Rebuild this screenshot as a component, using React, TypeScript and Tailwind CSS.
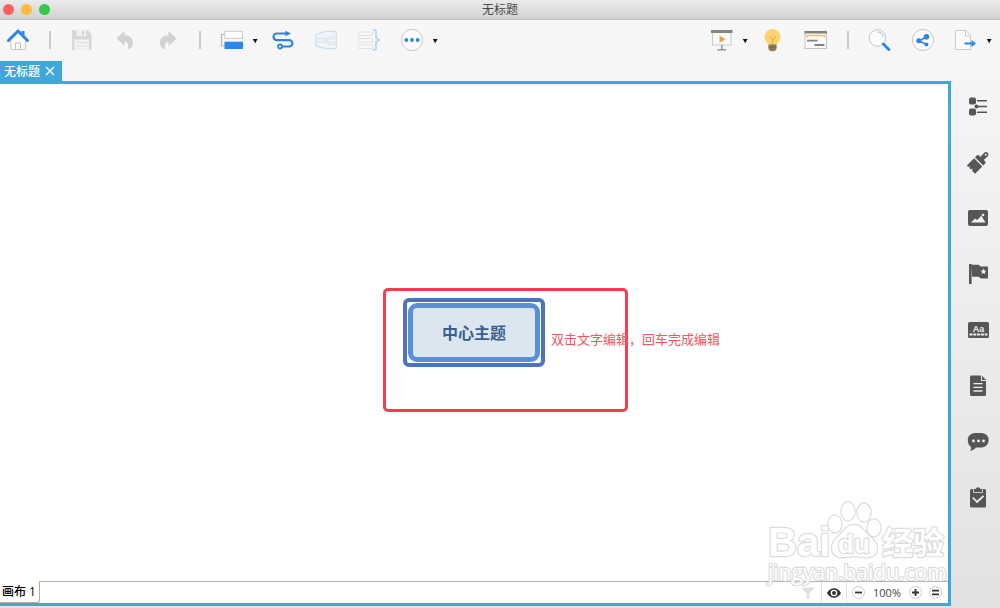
import type { ReactNode } from 'react'

type IconProps = { children: ReactNode }

function Icon({ children }: IconProps) {
  return (
    <svg viewBox="0 0 24 24" className="block size-6 shrink-0" fill="none" aria-hidden="true">
      {children}
    </svg>
  )
}

function ToolButton({ label, disabled, children }: { label: string; disabled?: boolean; children: ReactNode }) {
  return (
    <button type="button" aria-label={label} disabled={disabled} className="size-6 shrink-0">
      <Icon>{children}</Icon>
    </button>
  )
}

function MenuArrow({ label }: { label: string }) {
  return (
    <button type="button" aria-label={label} className="flex h-6 w-2 shrink-0 items-center justify-center">
      <svg viewBox="0 0 8 8" className="size-2" aria-hidden="true">
        <path d="M1.8 3h4.800L4.200 7.200z" fill="#111" />
      </svg>
    </button>
  )
}

function Separator() {
  return <div className="h-[18px] w-[2px] shrink-0 bg-[#cbcbcb]" />
}

const panels = [
  {
    label: '大纲',
    icon: (
      <g fill="#565656">
        <rect x="3" y="3.500" width="7" height="7" rx="2" />
        <rect x="3" y="14.500" width="7" height="7" rx="2" />
        <circle cx="10.500" cy="12.500" r="2" />
        <path d="M11 6h10v1.500H11zM12 11.800h9v1.500h-9zM11 17.500h10V19H11z" />
      </g>
    ),
  },
  {
    label: '格式',
    icon: (
      <g transform="translate(12 12.500) rotate(45)" fill="#565656">
        <path d="M-2.200-3.500L-2.600-11c0-1.500 1.100-2.700 2.600-2.700S2.600-12.500 2.600-11L2.200-3.500z" />
        <path d="M-5.800-1.500v-2.700c0-1 .7-1.600 1.600-1.600h8.400c.9 0 1.600.6 1.600 1.600v2.700z" />
        <path d="M-5.800-.3H5.800V10H1.500L.7 7.800-.2 10h-2L-3 8.300-3.800 10h-2z" />
        <circle cy="-11" r="1" fill="#f2f2f2" />
      </g>
    ),
  },
  {
    label: '图片',
    icon: (
      <>
        <rect x="2" y="4" width="20" height="16" rx="2" fill="#565656" />
        <path d="M5 16.500l4-4 2.300 1.500 4-4.200 4.200 6.700z" fill="#f0f0f0" />
        <circle cx="17" cy="9" r="1.300" fill="#f0f0f0" />
      </>
    ),
  },
  {
    label: '图标',
    icon: (
      <>
        <path d="M3 2h2.600v20H3z" fill="#565656" />
        <path d="M5 2.800h7.500c1 0 1.300 1.700 2.500 1.700h7V16.500h-6c-2 0-2.500-1.800-4-1.800H6.200z" fill="#565656" />
        <path d="M17.500 6.500l.9 2 2.100.2-1.600 1.400.5 2.100-1.900-1.100-1.900 1.100.5-2.100-1.600-1.400 2.100-.2z" fill="#f0f0f0" />
      </>
    ),
  },
  {
    label: '风格',
    icon: (
      <>
        <rect x="2" y="4" width="21" height="16" rx="1.500" fill="#565656" />
        <text x="12.500" y="13.500" textAnchor="middle" fontSize="9" fontWeight="bold" fill="#eee" fontFamily="Liberation Sans, sans-serif">
          Aa
        </text>
        <path d="M3.500 16.500h18" stroke="#eee" strokeWidth="1.800" strokeDasharray="3 .8" />
      </>
    ),
  },
  {
    label: '备注',
    icon: (
      <>
        <path d="M5.500 1.500H15V7h5v13.500c0 .8-.7 1.500-1.500 1.500h-13c-.8 0-1.500-.7-1.500-1.500V3c0-.8.7-1.500 1.500-1.500z" fill="#565656" />
        <path d="M16 1.800l4 4.200h-4z" fill="#565656" />
        <path d="M7.500 9.700h9M7.500 13.300h9M7.500 17h9" stroke="#eee" strokeWidth="1.300" />
      </>
    ),
  },
  {
    label: '批注',
    icon: (
      <>
        <path d="M9 3h6.500c4 0 7.200 3 7.200 7s-3.200 7.500-7.200 7.500H10c-1.500 1.800-3.500 3-6 3.800 1-1.300 1.400-2.700 1-4.300-2-1.300-3.200-4-3.200-7C1.800 6 5 3 9 3z" fill="#565656" />
        <circle cx="7.500" cy="11" r="1.400" fill="#eee" />
        <circle cx="12.500" cy="11" r="1.400" fill="#eee" />
        <circle cx="17.500" cy="11" r="1.400" fill="#eee" />
      </>
    ),
  },
  {
    label: '任务',
    icon: (
      <>
        <rect x="4" y="3" width="16" height="18.500" rx="1.500" fill="#565656" />
        <path d="M7.500 6.500V2.500h2.200C10 1.500 11 1 12 1s2 .5 2.300 1.500h2.200v4z" fill="#565656" stroke="#e6e6e6" strokeWidth=".8" />
        <path d="M6.800 11.500l4.300 4.500 6.400-6.200" stroke="#eee" strokeWidth="1.800" />
      </>
    ),
  },
]

function TitleBar() {
  return (
    <header className="grid h-5 grid-cols-[1fr_auto_1fr] items-center border-b border-[#bebebe] bg-linear-to-b from-[#ebebeb] to-[#d2d2d2] px-[3px]">
      <div className="flex gap-[7px]">
        <button type="button" aria-label="关闭" className="size-[11px] rounded-full bg-[#fc615d]" />
        <button type="button" aria-label="最小化" className="size-[11px] rounded-full bg-[#fdbc40]" />
        <button type="button" aria-label="缩放" className="size-[11px] rounded-full bg-[#34c84a]" />
      </div>
      <h1 className="text-[12px] leading-4 text-[#4a4a4a]">无标题</h1>
    </header>
  )
}

function Toolbar() {
  return (
    <div className="flex h-10 items-center justify-between pr-[14px] pl-[6px]">
      <div className="flex items-center gap-[19px]">
        <ToolButton label="主页">
          <path d="M5 11v10.500h14.500V11L12 4.500z" fill="#fbfbfb" stroke="#c9c9c9" />
          <path d="M9.500 21.500V15h5v6.500" stroke="#c0c0c0" />
          <path d="M17 3v5" stroke="#2b86ea" strokeWidth="3" />
          <path d="M2.500 12.500L12 3l9.500 9.500" stroke="#2b86ea" strokeWidth="3" strokeLinecap="round" />
        </ToolButton>
        <Separator />
        <ToolButton label="保存" disabled>
          <path d="M2 2h15.500l4 4v16H2z" fill="#d8d8d8" />
          <path d="M6.500 2h9.500v6h-9.500zM4.500 11.500H19V22H4.500z" fill="#f1f1f1" />
          <path d="M12 3h2v4h-2z" fill="#d2d2d2" />
          <path d="M6 14.500h11.500M6 18h11.500" stroke="#e2e2e2" />
        </ToolButton>
        <ToolButton label="撤销" disabled>
          <path d="M3.500 10.500L11.500 3v4.200c5.500.1 8.500 3.300 8.500 7.600 0 3.300-1.800 5.800-5.500 6.600 1.600-3.300.6-7.600-3-7.800v4.300z" fill="#d2d2d2" />
        </ToolButton>
        <ToolButton label="重做" disabled>
          <path d="M20.500 10.500L12.500 3v4.200C7 7.300 4 10.500 4 14.800c0 3.300 1.800 5.800 5.500 6.600-1.600-3.300-.6-7.600 3-7.800v4.300z" fill="#d2d2d2" />
        </ToolButton>
        <Separator />
        <div className="-mr-[7px] flex gap-[7px]">
          <ToolButton label="主题">
            <path d="M5 6.500H1.500V18H5" stroke="#b8b8b8" strokeWidth="1.200" />
            <rect x="4.800" y="3.300" width="17.700" height="7" fill="#fefefe" stroke="#cbcbcb" />
            <rect x="4.500" y="13.700" width="18.500" height="7.300" fill="#2b86ea" />
          </ToolButton>
          <MenuArrow label="主题选项" />
        </div>
        <ToolButton label="联系">
          <path d="M16 5.500H5.800a3.300 3.300 0 000 6.600h12.400a3.200 3.200 0 010 6.400H10" stroke="#2b86ea" strokeWidth="2.200" />
          <path d="M14.500 2.800L20 5.500l-5.500 2.700z" fill="#2b86ea" />
          <circle cx="9" cy="18.500" r="2" fill="#fff" stroke="#2b86ea" strokeWidth="1.800" />
        </ToolButton>
        <ToolButton label="外框" disabled>
          <path d="M1.500 7.500c0-.8.300-1.200 1-1.400L12 3.300h9c.8 0 1.200.4 1.200 1.200v15c0 .8-.4 1.200-1.200 1.200h-9l-9.500-2.600c-.7-.2-1-.6-1-1.400z" fill="#eef4f9" stroke="#c9e1f5" strokeWidth="1.200" />
          <path d="M4 10.500h7v3.500H4zM15 8.500h5V11h-5zM15 13.800h5v2.700h-5zM11 12.200h2V9.800h2M13 12.200v3h2" stroke="#e0e0e0" />
        </ToolButton>
        <ToolButton label="概要" disabled>
          <path d="M1.500 4h14v3.500h-14zM1.500 10.500h14V14h-14zM1.500 17h14v3.500h-14z" fill="#f8f8f8" stroke="#e2e2e2" />
          <path d="M16 2h1.500c1.200 0 1.500.5 1.500 1.500V10l3 2-3 2v6.500c0 1-.3 1.500-1.500 1.500H16" stroke="#a6d0f5" strokeWidth="1.500" />
        </ToolButton>
        <div className="flex gap-[7px]">
          <ToolButton label="更多">
            <circle cx="12" cy="12" r="10.600" fill="#fbfbfb" stroke="#c9c9c9" />
            <circle cx="6.300" cy="12" r="1.900" fill="#2b86ea" />
            <circle cx="12" cy="12" r="1.900" fill="#2b86ea" />
            <circle cx="17.700" cy="12" r="1.900" fill="#2b86ea" />
          </ToolButton>
          <MenuArrow label="更多选项" />
        </div>
      </div>

      <div className="flex items-center gap-[19px]">
        <div className="-mr-[7px] flex gap-[7px]">
          <ToolButton label="演示">
            <rect x="2.500" y="3" width="18.500" height="14" fill="#fafafa" stroke="#c9c9c9" />
            <path d="M1 2h21.500v3H1z" fill="#858585" />
            <path d="M9.500 7.500v7.500l6-3.700z" fill="#f6a13a" />
            <path d="M11.800 17v4.500M7.300 21.800h9" stroke="#858585" strokeWidth="1.300" />
          </ToolButton>
          <MenuArrow label="演示选项" />
        </div>
        <ToolButton label="头脑风暴">
          <path d="M11.500 1a8 8 0 00-8 8c0 3 1.500 4.500 2.800 6 .9 1 1.200 1.600 1.200 2.200h8c0-.6.300-1.200 1.200-2.200 1.300-1.500 2.800-3 2.800-6a8 8 0 00-8-8z" fill="#fdd272" />
          <path d="M8.500 8.500l3 3.500 3-3.500M11.500 12v5" stroke="#e9ad45" strokeWidth="1.100" />
          <path d="M7.500 16.500h8v4c0 1.700-1.700 2.700-4 2.700s-4-1-4-2.700z" fill="#8b7a52" />
          <path d="M7.500 19.200h8" stroke="#6f6554" />
        </ToolButton>
        <ToolButton label="甘特图">
          <rect x="1" y="3.500" width="21.500" height="17" fill="#fafafa" stroke="#c3c3c3" />
          <path d="M.5 3H23v2.500H.5z" fill="#818181" />
          <path d="M3 9.800V7.500h17.500v2.300" stroke="#f8bd63" strokeWidth="1.300" />
          <path d="M3 12.700h10.500M10.500 17h10" stroke="#858585" strokeWidth="1.800" />
        </ToolButton>
        <Separator />
        <ToolButton label="搜索">
          <circle cx="9.500" cy="10" r="8.300" fill="#fbfbfb" stroke="#c5c5c5" />
          <path d="M9 4c3.200-.2 5.800 2 6.200 5" stroke="#9cc7f4" strokeWidth="1.100" />
          <path d="M15.300 16l5.500 5.500" stroke="#2b86ea" strokeWidth="3" strokeLinecap="round" />
        </ToolButton>
        <ToolButton label="分享">
          <circle cx="12" cy="12" r="10.600" fill="#fbfbfb" stroke="#c9c9c9" />
          <path d="M15.500 9l-7.500 4 7.500 3.500" stroke="#2b86ea" strokeWidth="1.500" />
          <circle cx="15.500" cy="8.800" r="2.800" fill="#2b86ea" />
          <circle cx="7.800" cy="12.800" r="2.500" fill="#2b86ea" />
          <circle cx="15.500" cy="16.500" r="2" fill="#2b86ea" />
        </ToolButton>
        <div className="-mr-[7px] flex gap-[7px]">
          <ToolButton label="导出">
            <path d="M1.500 2.500H12l4.500 5v14h-15z" fill="#fbfbfb" stroke="#c9c9c9" />
            <path d="M11.500 2.500V8h5" stroke="#c9c9c9" />
            <path d="M10.500 15.500h8" stroke="#2b86ea" strokeWidth="2" />
            <path d="M17.500 12l4.500 3.500-4.500 3.500z" fill="#2b86ea" />
          </ToolButton>
          <MenuArrow label="导出选项" />
        </div>
      </div>
    </div>
  )
}

function Watermark() {
  return (
    <svg
      viewBox="0 0 184 96"
      className="pointer-events-none absolute right-0 bottom-2 h-24 w-[184px]"
      fill="#fff"
      stroke="#dcdcdc"
      strokeWidth="2.400"
      strokeLinejoin="round"
      paintOrder="stroke"
      aria-hidden="true"
    >
      <text x="4" y="57" fontSize="40" fontWeight="bold" fontFamily="'Liberation Sans', sans-serif">Bai</text>
      <ellipse cx="71" cy="25" rx="6.500" ry="8.500" />
      <ellipse cx="84" cy="12.500" rx="6.500" ry="9" />
      <ellipse cx="100" cy="13.500" rx="6.500" ry="9" />
      <ellipse cx="110" cy="29" rx="6.500" ry="8.500" />
      <path d="M90 26c-7 0-10 6-15 11-5 4-7 8-7 12 0 7 6 10 12 9 7-1 13-1 20 0 7 1 13-2 13-9 0-5-4-9-8-12-5-5-8-11-15-11z" />
      <text x="74" y="54" fontSize="26" fontWeight="bold" fontFamily="'Liberation Sans', sans-serif">du</text>
      <text x="118" y="55" fontSize="31" fontWeight="bold" fontFamily="'Noto Sans CJK SC', sans-serif">经验</text>
      <text x="4" y="81" fontSize="21" fontFamily="'Open Sans', sans-serif">jingyan.baidu.com</text>
    </svg>
  )
}

function RoundButton({ label, d }: { label: string; d: string }) {
  return (
    <button type="button" aria-label={label} className="size-[13px] shrink-0">
      <svg viewBox="0 0 13 13" className="block size-[13px]" aria-hidden="true">
        <circle cx="6.500" cy="6.500" r="6" fill="#fff" stroke="#ccc" />
        <path d={d} stroke="#333" strokeWidth="1.800" />
      </svg>
    </button>
  )
}

function SheetBar() {
  return (
    <footer className="flex h-[22px] items-stretch">
      <button type="button" className="shrink-0 rounded-br-[3px] border-r border-b border-[#adadad] pr-[3px] pl-[2px] text-[12px] leading-5 font-medium text-black">
        画布 1
      </button>
      <div className="flex flex-1 items-center justify-end border-t border-[#b3b3b3] pr-[6px]">
        <button type="button" aria-label="筛选" className="mr-[6px]">
          <svg viewBox="0 0 14 14" className="block size-[14px]" aria-hidden="true">
            <path d="M1 1.500h12v1.500L8.500 7v6h-3V7L1 3z" fill="#e2e2e2" />
          </svg>
        </button>
        <button type="button" aria-label="显示" className="flex h-full w-[26px] items-center justify-center border-x border-[#e4e4e4]">
          <svg viewBox="0 0 16 12" className="block h-3 w-4" aria-hidden="true">
            <path d="M1 6c3-6.300 11-6.300 14 0-3 6.300-11 6.300-14 0z" fill="#333" />
            <circle cx="8" cy="6" r="3.300" fill="#fff" />
            <circle cx="8" cy="6" r="2" fill="#333" />
          </svg>
        </button>
        <div className="flex items-center gap-[7px] pl-[5px]">
          <RoundButton label="缩小" d="M3 6.500h7" />
          <span className="w-[30px] text-center text-[11px] leading-4 text-[#444]">100%</span>
          <RoundButton label="放大" d="M3 6.500h7M6.500 3v7" />
          <RoundButton label="实际大小" d="M3 4.700h7M3 8.300h7" />
        </div>
      </div>
    </footer>
  )
}

export default function App() {
  return (
    <div className="flex min-h-screen flex-col bg-linear-to-b from-[#f8f8f8] to-[#e2e2e2] font-['Open_Sans','Noto_Sans_CJK_SC',sans-serif]">
      <TitleBar />
      <Toolbar />
      <div className="flex pt-px">
        <div className="flex h-5 gap-[5px] bg-[#3da8d9] pr-[7px] pl-1 text-white">
          <span className="pt-px text-[12px] leading-5 font-medium">无标题</span>
          <button type="button" aria-label="关闭标签" className="flex h-5 w-[10px] items-center">
            <svg viewBox="0 0 10 10" className="block size-[10px]" aria-hidden="true">
              <path d="M1 1l8 8M9 1L1 9" stroke="#fff" strokeWidth="1.300" />
            </svg>
          </button>
        </div>
      </div>

      <div className="flex flex-1 pb-[2px]">
        <div className="relative flex flex-1 flex-col border-t-3 border-r-3 border-b-3 border-[#3da8d9] bg-white">
          <main className="flex flex-1 items-center justify-center">
            <div className="relative">
              <button type="button" className="block rounded-[6px] border-4 border-[#4d73ba] bg-white p-px">
                <span className="flex h-[59px] w-[132px] items-center justify-center rounded-[9px] border-5 border-[#5891d5] bg-[#dce6f1] text-[16px] leading-6 font-bold text-[#38608f]">
                  中心主题
                </span>
              </button>
              {/* highlight frame and hint hang off the central topic */}
              <div className="pointer-events-none absolute -top-[10px] -left-5 h-[124px] w-[245px] rounded-[5px] border-3 border-[#fa3c4c]" />
              <p className="absolute top-[31px] left-[148px] text-[13px] leading-5 whitespace-nowrap text-[#fa5260]">
                双击文字编辑，回车完成编辑
              </p>
            </div>
          </main>
          <SheetBar />
          <Watermark />
        </div>

        <aside className="flex w-[49px] shrink-0 flex-col items-center gap-8 pt-[13px] pl-[5px]">
          {panels.map((p) => (
            <ToolButton key={p.label} label={p.label}>
              {p.icon}
            </ToolButton>
          ))}
        </aside>
      </div>
    </div>
  )
}
